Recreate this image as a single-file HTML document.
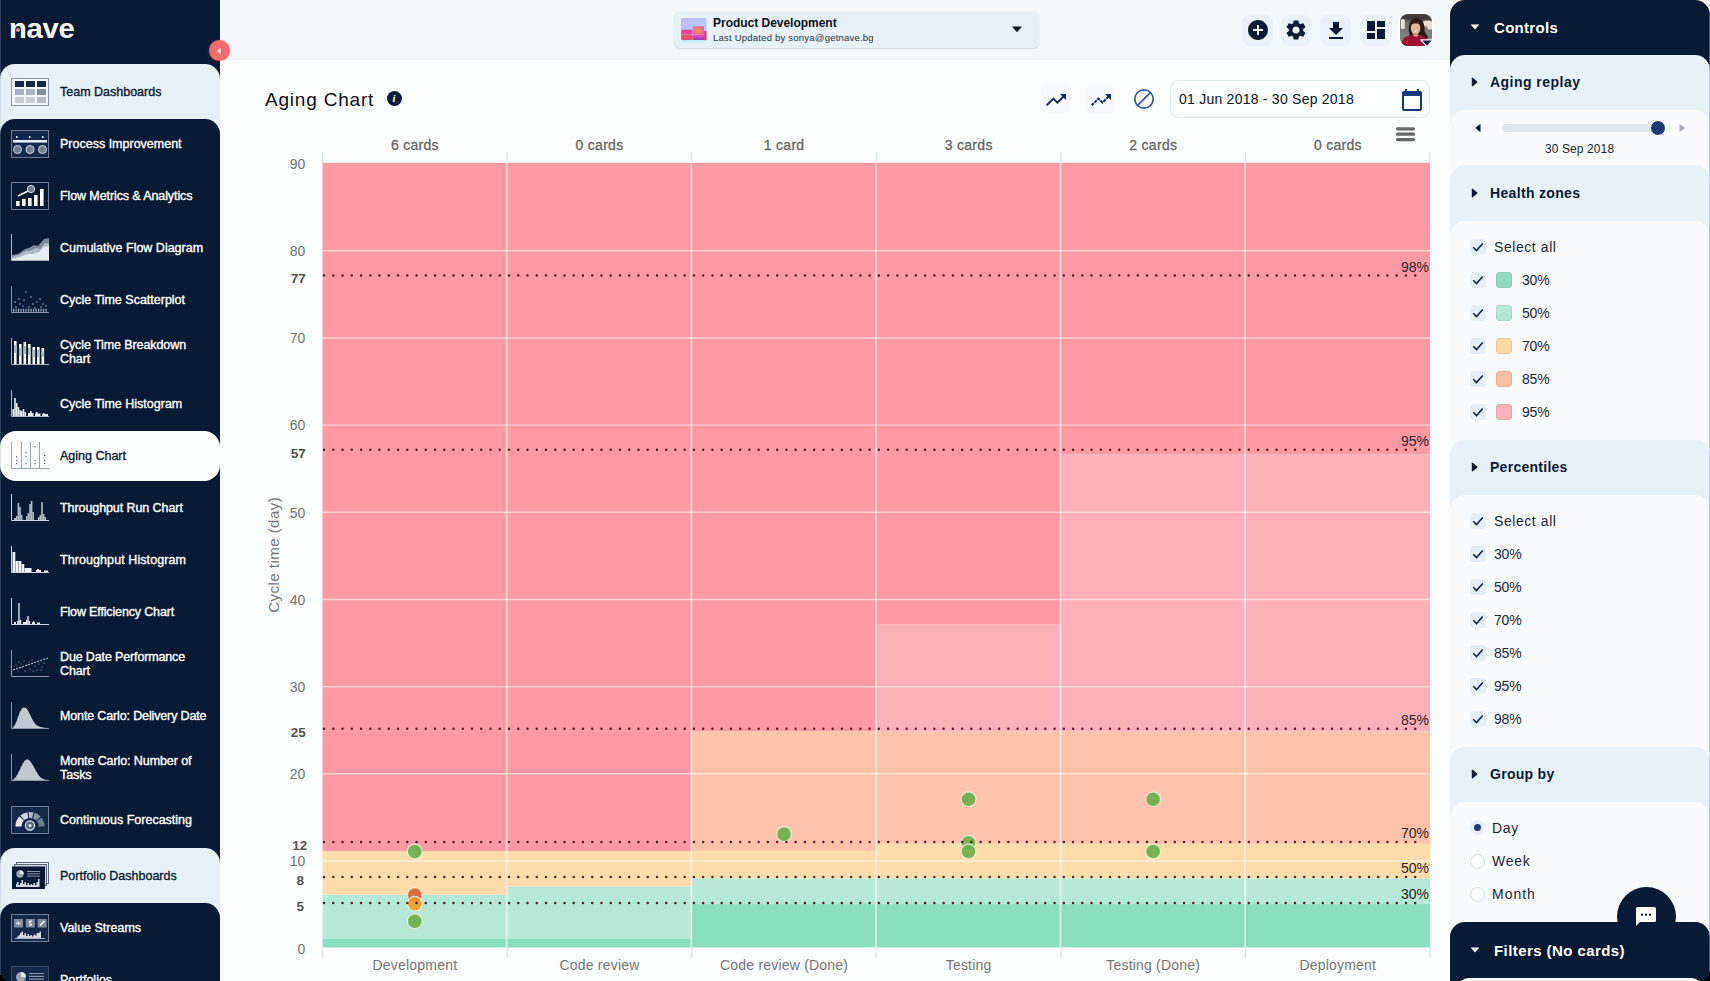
<!DOCTYPE html>
<html lang="en">
<head>
<meta charset="utf-8">
<title>Aging Chart - Nave</title>
<style>
*{box-sizing:border-box;margin:0;padding:0}
html,body{width:1710px;height:981px;overflow:hidden}
body{font-family:"Liberation Sans",sans-serif;background:#fcfdfe;color:#0a1b35;position:relative}
.abs{position:absolute}
/* ---------- left sidebar ---------- */
#side{position:absolute;left:0;top:0;width:220px;height:981px;background:#081a34;overflow:hidden}
#side .light{position:absolute;left:0;width:220px;background:#e9f1f8;border-radius:15px 15px 0 0}
#side .dark{position:absolute;left:0;width:220px;background:#081a34;border-radius:15px 15px 0 0}
#side .pill{position:absolute;left:0;top:430.500px;width:220px;height:50.500px;background:#fcfdfe;border-radius:16px}
.nav{position:absolute;left:60px;width:160px;color:#fff;font-size:12.500px;font-weight:normal;-webkit-text-stroke:.35px currentColor;line-height:14px;letter-spacing:0;white-space:nowrap}
.nav.dk{color:#081a34}
.ico{position:absolute;left:11px;width:38px;height:28px}
/* ---------- header ---------- */
#head{position:absolute;left:220px;top:0;width:1230px;height:60px;background:#f5f8fb}
#proj{position:absolute;left:674px;top:11px;width:365px;height:37px;background:#e8f0f8;border-radius:6px;box-shadow:0 1px 1.500px rgba(10,27,54,.14)}
.hbtn{position:absolute;top:14.500px;width:31px;height:31px;border-radius:8px;background:#eaf1f8}
/* ---------- right panel ---------- */
#right{position:absolute;left:1450px;top:0;width:260px;height:981px;background:#f9fbfd;overflow:hidden}
#right .blk{position:absolute;left:0;width:260px;border-radius:15px 15px 0 0}
.rh{position:absolute;left:40px;font-size:14px;font-weight:bold;color:#081a34;white-space:nowrap;letter-spacing:.15px}
.rl{position:absolute;font-size:14px;color:#1c2433;white-space:nowrap;letter-spacing:.3px}
.cb{position:absolute;left:20px;width:16px;height:16px;border-radius:4px;background:#e6eef7}
.sw{position:absolute;left:46px;width:16px;height:16px;border-radius:4px}
</style>
</head>
<body>

<!-- HEADER -->
<div id="head"></div>
<div id="proj"></div>
<svg class="abs" style="left:681px;top:17.500px" width="26" height="26" viewBox="0 0 26 26">
  <defs><linearGradient id="tg" x1="0" y1="0" x2="1" y2="1"><stop offset="0" stop-color="#c4b6f6"/><stop offset=".5" stop-color="#b9c6fa"/><stop offset="1" stop-color="#d6c4f6"/></linearGradient>
  <radialGradient id="to" cx=".45" cy=".5" r=".7"><stop offset="0" stop-color="#fb9a5e"/><stop offset="1" stop-color="#f0509a"/></radialGradient>
  <linearGradient id="tm" x1="0" y1="0" x2="0" y2="1"><stop offset="0" stop-color="#f255b8"/><stop offset="1" stop-color="#9a30c4"/></linearGradient></defs>
  <rect x="2" y="21" width="21" height="4" rx="2" fill="#b4f1f4" opacity=".7"/>
  <rect width="25.500" height="22.200" rx="1" fill="url(#tg)"/>
  <rect x=".2" y="11.700" width="11.500" height="4.700" rx="1" fill="#f040a2"/>
  <rect x=".2" y="16.800" width="11.500" height="5.300" rx="1" fill="#ee4e6e"/>
  <rect x="11.900" y="8.600" width="11.200" height="7.800" rx="1" fill="url(#to)"/>
  <rect x="11.900" y="16.600" width="11.500" height="5.500" rx="1" fill="url(#tm)"/>
  <rect x="23.300" y="13" width="2.200" height="9.100" fill="#d2366f"/>
</svg>
<div class="abs" id="pj1" style="left:713px;top:16px;font-size:12px;line-height:14px;font-weight:bold;color:#0a1220;white-space:nowrap;letter-spacing:-.02px">Product Development</div>
<div class="abs" id="pj2" style="left:713px;top:32px;font-size:9.500px;line-height:12px;color:#2a3140;white-space:nowrap;letter-spacing:.22px">Last Updated by sonya@getnave.bg</div>
<svg class="abs" style="left:1011px;top:26px" width="12" height="7" viewBox="0 0 12 7"><path d="M1 .5h10L6 6.200z" fill="#0a1220"/></svg>

<div class="hbtn" style="left:1242px"></div><div class="hbtn" style="left:1281px"></div><div class="hbtn" style="left:1320px"></div><div class="hbtn" style="left:1360px"></div>
<svg class="abs" style="left:1245.800px;top:18.300px" width="24" height="24" viewBox="0 0 24 24"><path fill="#081a34" d="M12 2C6.480 2 2 6.480 2 12s4.480 10 10 10 10-4.480 10-10S17.520 2 12 2zm5 11h-4v4h-2v-4H7v-2h4V7h2v4h4v2z"/></svg>
<svg class="abs" style="left:1284.400px;top:18.200px" width="24" height="24" viewBox="0 0 24 24"><path fill="#081a34" d="M19.140 12.940c.04-.3.06-.61.06-.94 0-.32-.02-.64-.07-.94l2.030-1.580c.18-.14.23-.41.12-.61l-1.920-3.320c-.12-.22-.37-.29-.59-.22l-2.390.96c-.5-.38-1.030-.7-1.620-.94l-.36-2.540c-.04-.24-.24-.41-.48-.41h-3.840c-.24 0-.43.17-.47.41l-.36 2.540c-.59.24-1.130.57-1.620.94l-2.390-.96c-.22-.08-.47 0-.59.22L2.740 8.870c-.12.21-.08.47.12.61l2.030 1.580c-.05.3-.09.63-.09.940s.02.640.07.940l-2.030 1.580c-.18.14-.23.41-.12.61l1.920 3.320c.12.22.37.29.59.22l2.390-.96c.5.38 1.030.7 1.620.94l.36 2.540c.05.24.24.41.48.41h3.840c.24 0 .44-.17.47-.41l.36-2.540c.59-.24 1.130-.56 1.620-.94l2.390.96c.22.08.47 0 .59-.22l1.920-3.320c.12-.22.07-.47-.12-.61l-2.010-1.580zM12 15.600c-1.980 0-3.600-1.620-3.600-3.600s1.620-3.600 3.600-3.600 3.600 1.620 3.600 3.600-1.620 3.600-3.600 3.600z"/></svg>
<svg class="abs" style="left:1324px;top:18.500px" width="24" height="24" viewBox="0 0 24 24"><path fill="#081a34" d="M19 9h-4V3H9v6H5l7 7 7-7zM5 18v2h14v-2H5z"/></svg>
<svg class="abs" style="left:1364px;top:18px" width="24" height="24" viewBox="0 0 24 24"><path fill="#081a34" d="M3 13h8V3H3v10zm0 8h8v-6H3v6zm10 0h8V11h-8v10zm0-18v6h8V3h-8z"/></svg>
<!-- avatar -->
<svg class="abs" style="left:1398px;top:12px" width="36" height="36" viewBox="-2 -2 36 36">
  <defs><clipPath id="avc"><rect width="32" height="32" rx="8"/></clipPath>
  <linearGradient id="avb" x1="0" y1="0" x2="0" y2="1"><stop offset="0" stop-color="#4a4644"/><stop offset=".12" stop-color="#3c3836"/><stop offset=".3" stop-color="#77736f"/><stop offset="1" stop-color="#8c8c8e"/></linearGradient></defs>
  <rect x="-1.200" y="-1.200" width="34.400" height="34.400" rx="9" fill="#fcfdfe"/>
  <g clip-path="url(#avc)"><rect width="32" height="32" fill="url(#avb)"/>
  <rect x=".8" y="5" width="4" height="10" rx="1.500" fill="#e6e2d4"/><path d="M23 7.500q4-2 9 0v8h-4l-1-3h-4z" fill="#e9dcd0"/>
  <path d="M9.500 21c-2-8 0-17 6.500-17s9 6 8.500 12c0 3 3 5 4 8l-6 2H11z" fill="#2b1b18"/>
  <ellipse cx="15.600" cy="14.300" rx="4.700" ry="6.300" fill="#e3b59c"/>
  <path d="M11 10.500c1-3.500 8-3.500 9.500 0-3-1.500-6.500-1.500-9.500 0z" fill="#3a2420"/>
  <path d="M13.300 16.300q2.300 1 4.800 0q-2.400 2.800-4.800 0z" fill="#fff"/>
  <path d="M12.600 20.500h6v4h-6z" fill="#e0a890"/>
  <path d="M1 32c0-7 5-10.500 11.500-11 2 2 5 2 7 0 5 .5 8 4 8.500 11z" fill="#9c1030"/></g>
  <path d="M20.800 25.900h12.400l-6.200 6.500z" fill="#081a34" stroke="#fcfdfe" stroke-width="1.300" stroke-linejoin="round"/>
</svg>

<!-- title -->
<div class="abs" id="title" style="left:265px;top:87.500px;font-size:19px;line-height:24px;color:#0b0e16;white-space:nowrap;letter-spacing:.8px">Aging Chart</div>
<div class="abs" style="left:386.500px;top:91px;width:15px;height:15px;border-radius:50%;background:#081a34;color:#fff;font-family:'Liberation Serif',serif;font-weight:bold;font-style:italic;font-size:11px;line-height:15px;text-align:center">i</div>

<!-- toolbar -->
<div class="abs" style="left:1041px;top:84px;width:30px;height:30px;border-radius:8px;background:#f8fafd"></div>
<div class="abs" style="left:1085px;top:84px;width:30px;height:30px;border-radius:8px;background:#f8fafd"></div>
<svg class="abs" style="left:1044px;top:87.500px" width="24" height="24" viewBox="0 0 24 24"><path fill="#14295e" d="M16 6l2.290 2.290-4.880 4.880-4-4L2 16.590 3.410 18l6-6 4 4 6.300-6.290L22 12V6z"/></svg>
<svg class="abs" style="left:1088.500px;top:87.500px" width="24" height="24" viewBox="0 0 24 24"><path fill="none" stroke="#7d8fb8" stroke-width="1.600" d="M2.700 17.300l6.700-6.700 4 4 6.500-6.500"/><path fill="none" stroke="#14295e" stroke-width="2" stroke-dasharray="2.600 1.600" d="M2.700 17.300l6.700-6.700 4 4 6.500-6.500"/><path fill="#14295e" d="M16 6l2.290 2.290L20.500 10.500 22 12V6z"/></svg>
<svg class="abs" style="left:1132px;top:87px" width="24" height="24" viewBox="0 0 24 24"><circle cx="12" cy="12" r="9.200" fill="none" stroke="#3a5593" stroke-width="1.700"/><path d="M5.600 18.400L18.400 5.600" stroke="#3a5593" stroke-width="1.700"/></svg>
<div class="abs" style="left:1170px;top:80px;width:260px;height:38px;border:1px solid #dfe7f0;border-radius:9px;background:#fdfeff"></div>
<div class="abs" id="dater" style="left:1179px;top:90px;font-size:14px;line-height:18px;color:#0a1220;white-space:nowrap;letter-spacing:.24px">01 Jun 2018 - 30 Sep 2018</div>
<svg class="abs" style="left:1400px;top:87.500px" width="24" height="24" viewBox="0 0 24 24"><path fill="#17377a" d="M20 3h-1V1h-2v2H7V1H5v2H4c-1.100 0-2 .9-2 2v16c0 1.100.9 2 2 2h16c1.100 0 2-.9 2-2V5c0-1.100-.9-2-2-2zm0 18H4V8h16v13z"/></svg>
<svg class="abs" style="left:1394px;top:124px" width="24" height="20" viewBox="0 0 24 20"><path d="M3.500 4.800h16M3.500 10.200h16M3.500 15.600h16" stroke="#666" stroke-width="3.200" stroke-linecap="round"/></svg>

<!-- CHART -->
<svg class="abs" style="left:220px;top:120px" width="1230" height="861" viewBox="220 120 1230 861" font-family="'Liberation Sans',sans-serif">
<rect x="322.50" y="938.33" width="184.58" height="9.07" fill="#8bdfc1"/>
<rect x="322.50" y="894.66" width="184.58" height="43.68" fill="#b4ead7"/>
<rect x="322.50" y="851.07" width="184.58" height="43.59" fill="#ffdca9"/>
<rect x="322.50" y="162.80" width="184.58" height="688.27" fill="#ff99a3"/>
<rect x="507.08" y="938.33" width="184.58" height="9.07" fill="#8bdfc1"/>
<rect x="507.08" y="886.38" width="184.58" height="51.96" fill="#b4ead7"/>
<rect x="507.08" y="851.07" width="184.58" height="35.31" fill="#ffdca9"/>
<rect x="507.08" y="162.80" width="184.58" height="688.27" fill="#ff99a3"/>
<rect x="691.67" y="904.07" width="184.58" height="43.33" fill="#8bdfc1"/>
<rect x="691.67" y="878.27" width="184.58" height="25.80" fill="#b4ead7"/>
<rect x="691.67" y="851.07" width="184.58" height="27.20" fill="#ffdca9"/>
<rect x="691.67" y="731.20" width="184.58" height="119.87" fill="#ffc3a9"/>
<rect x="691.67" y="162.80" width="184.58" height="568.40" fill="#ff99a3"/>
<rect x="876.25" y="904.07" width="184.58" height="43.33" fill="#8bdfc1"/>
<rect x="876.25" y="878.27" width="184.58" height="25.80" fill="#b4ead7"/>
<rect x="876.25" y="843.83" width="184.58" height="34.44" fill="#ffdca9"/>
<rect x="876.25" y="731.20" width="184.58" height="112.63" fill="#ffc3a9"/>
<rect x="876.25" y="624.41" width="184.58" height="106.79" fill="#ffb1b9"/>
<rect x="876.25" y="162.80" width="184.58" height="461.61" fill="#ff99a3"/>
<rect x="1060.83" y="904.07" width="184.58" height="43.33" fill="#8bdfc1"/>
<rect x="1060.83" y="878.27" width="184.58" height="25.80" fill="#b4ead7"/>
<rect x="1060.83" y="843.83" width="184.58" height="34.44" fill="#ffdca9"/>
<rect x="1060.83" y="731.20" width="184.58" height="112.63" fill="#ffc3a9"/>
<rect x="1060.83" y="454.24" width="184.58" height="276.96" fill="#ffb1b9"/>
<rect x="1060.83" y="162.80" width="184.58" height="291.44" fill="#ff99a3"/>
<rect x="1245.42" y="904.07" width="184.58" height="43.33" fill="#8bdfc1"/>
<rect x="1245.42" y="878.27" width="184.58" height="25.80" fill="#b4ead7"/>
<rect x="1245.42" y="843.83" width="184.58" height="34.44" fill="#ffdca9"/>
<rect x="1245.42" y="731.20" width="184.58" height="112.63" fill="#ffc3a9"/>
<rect x="1245.42" y="454.24" width="184.58" height="276.96" fill="#ffb1b9"/>
<rect x="1245.42" y="162.80" width="184.58" height="291.44" fill="#ff99a3"/>
<path d="M322.5 861.0H1430.0M322.5 773.8H1430.0M322.5 686.7H1430.0M322.5 599.5H1430.0M322.5 512.3H1430.0M322.5 425.1H1430.0M322.5 338.0H1430.0M322.5 250.8H1430.0" stroke="#fff" stroke-opacity=".52" stroke-width="1.4" fill="none"/>
<path d="M322.5 152V162.8M322.5 947.4V958M507.1 152V162.8M507.1 947.4V958M691.7 152V162.8M691.7 947.4V958M876.2 152V162.8M876.2 947.4V958M1060.8 152V162.8M1060.8 947.4V958M1245.4 152V162.8M1245.4 947.4V958M1430.0 152V162.8M1430.0 947.4V958" stroke="#d9e0ec" stroke-width="1.2" fill="none"/>
<path d="M506.7 162.8V947.4M691.3 162.8V947.4M875.9 162.8V947.4M1060.4 162.8V947.4M1245.0 162.8V947.4" stroke="#fff" stroke-opacity=".5" stroke-width="2" fill="none"/>
<circle cx="414.8" cy="851.5" r="7.4" fill="#6cb04e" fill-opacity=".92" stroke="#f1f4de" stroke-opacity=".85" stroke-width="1.2"/>
<circle cx="414.8" cy="895.1" r="7.4" fill="#d9603b" fill-opacity=".92" stroke="#f1f4de" stroke-opacity=".85" stroke-width="1.2"/>
<circle cx="414.8" cy="903.8" r="7.4" fill="#f39a2d" fill-opacity=".92" stroke="#f1f4de" stroke-opacity=".85" stroke-width="1.2"/>
<circle cx="414.8" cy="921.2" r="7.4" fill="#6cb04e" fill-opacity=".92" stroke="#f1f4de" stroke-opacity=".85" stroke-width="1.2"/>
<circle cx="784.0" cy="834.1" r="7.4" fill="#6cb04e" fill-opacity=".92" stroke="#f1f4de" stroke-opacity=".85" stroke-width="1.2"/>
<circle cx="968.5" cy="799.2" r="7.4" fill="#6cb04e" fill-opacity=".92" stroke="#f1f4de" stroke-opacity=".85" stroke-width="1.2"/>
<circle cx="968.5" cy="842.8" r="7.4" fill="#6cb04e" fill-opacity=".92" stroke="#f1f4de" stroke-opacity=".85" stroke-width="1.2"/>
<circle cx="968.5" cy="851.5" r="7.4" fill="#6cb04e" fill-opacity=".92" stroke="#f1f4de" stroke-opacity=".85" stroke-width="1.2"/>
<circle cx="1153.1" cy="799.2" r="7.4" fill="#6cb04e" fill-opacity=".92" stroke="#f1f4de" stroke-opacity=".85" stroke-width="1.2"/>
<circle cx="1153.1" cy="851.5" r="7.4" fill="#6cb04e" fill-opacity=".92" stroke="#f1f4de" stroke-opacity=".85" stroke-width="1.2"/>
<path d="M324.05 275.4H1424" stroke="#43121a" stroke-opacity=".92" stroke-width="2.5" stroke-linecap="round" stroke-dasharray="0.01 9.237" fill="none"/>
<text x="1429" y="271.7" text-anchor="end" font-size="14" fill="#2e2224">98%</text>
<text x="305.7" y="283.4" text-anchor="end" font-size="13.500" font-weight="bold" fill="#525252">77</text>
<path d="M324.05 449.8H1424" stroke="#43121a" stroke-opacity=".92" stroke-width="2.5" stroke-linecap="round" stroke-dasharray="0.01 9.237" fill="none"/>
<text x="1429" y="446.1" text-anchor="end" font-size="14" fill="#2e2224">95%</text>
<text x="305.7" y="457.8" text-anchor="end" font-size="13.500" font-weight="bold" fill="#525252">57</text>
<path d="M324.05 728.8H1424" stroke="#43121a" stroke-opacity=".92" stroke-width="2.5" stroke-linecap="round" stroke-dasharray="0.01 9.237" fill="none"/>
<text x="1429" y="725.1" text-anchor="end" font-size="14" fill="#2e2224">85%</text>
<text x="305.7" y="736.8" text-anchor="end" font-size="13.500" font-weight="bold" fill="#525252">25</text>
<path d="M324.05 842.1H1424" stroke="#43121a" stroke-opacity=".92" stroke-width="2.5" stroke-linecap="round" stroke-dasharray="0.01 9.237" fill="none"/>
<text x="1429" y="838.4" text-anchor="end" font-size="14" fill="#2e2224">70%</text>
<text x="307.4" y="850.1" text-anchor="end" font-size="13.500" font-weight="bold" fill="#525252">12</text>
<path d="M324.05 877.0H1424" stroke="#43121a" stroke-opacity=".92" stroke-width="2.5" stroke-linecap="round" stroke-dasharray="0.01 9.237" fill="none"/>
<text x="1429" y="873.3" text-anchor="end" font-size="14" fill="#2e2224">50%</text>
<text x="303.9" y="885.0" text-anchor="end" font-size="13.500" font-weight="bold" fill="#525252">8</text>
<path d="M324.05 903.1H1424" stroke="#43121a" stroke-opacity=".92" stroke-width="2.5" stroke-linecap="round" stroke-dasharray="0.01 9.237" fill="none"/>
<text x="1429" y="899.4" text-anchor="end" font-size="14" fill="#2e2224">30%</text>
<text x="303.9" y="911.1" text-anchor="end" font-size="13.500" font-weight="bold" fill="#525252">5</text>
<text x="305.4" y="953.5" text-anchor="end" font-size="14" fill="#707070">0</text>
<text x="305.4" y="866.3" text-anchor="end" font-size="14" fill="#707070">10</text>
<text x="305.4" y="779.1" text-anchor="end" font-size="14" fill="#707070">20</text>
<text x="305.4" y="692.0" text-anchor="end" font-size="14" fill="#707070">30</text>
<text x="305.4" y="604.8" text-anchor="end" font-size="14" fill="#707070">40</text>
<text x="305.4" y="517.6" text-anchor="end" font-size="14" fill="#707070">50</text>
<text x="305.4" y="430.4" text-anchor="end" font-size="14" fill="#707070">60</text>
<text x="305.4" y="343.3" text-anchor="end" font-size="14" fill="#707070">70</text>
<text x="305.4" y="256.1" text-anchor="end" font-size="14" fill="#707070">80</text>
<text x="305.4" y="168.9" text-anchor="end" font-size="14" fill="#707070">90</text>
<text x="414.9" y="149.6" text-anchor="middle" font-size="14" fill="#666" stroke="#666" stroke-width=".3" letter-spacing=".3">6 cards</text>
<text x="414.9" y="970" text-anchor="middle" font-size="14" fill="#747474" letter-spacing=".2">Development</text>
<text x="599.5" y="149.6" text-anchor="middle" font-size="14" fill="#666" stroke="#666" stroke-width=".3" letter-spacing=".3">0 cards</text>
<text x="599.5" y="970" text-anchor="middle" font-size="14" fill="#747474" letter-spacing=".2">Code review</text>
<text x="784.1" y="149.6" text-anchor="middle" font-size="14" fill="#666" stroke="#666" stroke-width=".3" letter-spacing=".3">1 card</text>
<text x="784.1" y="970" text-anchor="middle" font-size="14" fill="#747474" letter-spacing=".2">Code review (Done)</text>
<text x="968.7" y="149.6" text-anchor="middle" font-size="14" fill="#666" stroke="#666" stroke-width=".3" letter-spacing=".3">3 cards</text>
<text x="968.6" y="970" text-anchor="middle" font-size="14" fill="#747474" letter-spacing=".2">Testing</text>
<text x="1153.3" y="149.6" text-anchor="middle" font-size="14" fill="#666" stroke="#666" stroke-width=".3" letter-spacing=".3">2 cards</text>
<text x="1153.2" y="970" text-anchor="middle" font-size="14" fill="#747474" letter-spacing=".2">Testing (Done)</text>
<text x="1337.9" y="149.6" text-anchor="middle" font-size="14" fill="#666" stroke="#666" stroke-width=".3" letter-spacing=".3">0 cards</text>
<text x="1337.8" y="970" text-anchor="middle" font-size="14" fill="#747474" letter-spacing=".2">Deployment</text>
<text transform="translate(278.5 554.8) rotate(-90)" text-anchor="middle" font-size="15" fill="#777" letter-spacing=".48">Cycle time (day)</text>
</svg>

<!-- SIDEBAR -->
<div id="side">
  <div class="light" style="top:64px;height:80px"></div>
  <div class="dark" style="top:119px;height:760px"></div>
  <div class="pill"></div>
  <div class="light" style="top:848px;height:80px"></div>
  <div class="dark" style="top:903px;height:90px"></div>
  <!-- logo -->
  <div class="abs" style="left:9.300px;top:13px;font-size:27px;line-height:32px;font-weight:bold;color:#fff;letter-spacing:-.2px;transform:scaleX(1.08);transform-origin:0 0">nave</div>
  <div class="abs" style="left:15.600px;top:28.300px;width:4px;height:4px;border-radius:50%;background:#f58a8a"></div>

  <!-- Team Dashboards -->
  <svg class="ico" style="top:78px" viewBox="0 0 38 28"><rect x=".5" y=".5" width="37" height="27" fill="#f3f6fa" stroke="#8a95a5"/>
    <g fill="#14294a"><rect x="4" y="3" width="9" height="6"/><rect x="15" y="3" width="9" height="6"/><rect x="26" y="3" width="9" height="6"/></g>
    <g fill="#aab3c0"><rect x="4" y="11" width="9" height="6"/><rect x="15" y="11" width="9" height="6"/></g><rect x="26" y="11" width="9" height="6" fill="#7f8a9c"/>
    <g fill="#c8cfd8"><rect x="4" y="19" width="9" height="6"/><rect x="15" y="19" width="9" height="6"/><rect x="26" y="19" width="9" height="6" fill="#b4bcc8"/></g></svg>
  <div class="nav dk" style="top:84.5px">Team Dashboards</div>

  <!-- Process Improvement -->
  <svg class="ico" style="top:130px" viewBox="0 0 38 28"><rect x=".5" y=".5" width="37" height="27" fill="#14294a" stroke="#6f7c92"/>
    <rect x="2" y="10" width="34" height="2.600" fill="#e8edf3"/><g fill="#e8edf3"><rect x="5" y="6" width="1.500" height="2"/><rect x="18" y="6" width="1.500" height="2"/><rect x="31" y="6" width="1.500" height="2"/></g>
    <g fill="#6f7c92" stroke="#cfd6df" stroke-width="1"><circle cx="6.500" cy="19.500" r="4"/><circle cx="19" cy="19.500" r="4"/><circle cx="31.500" cy="19.500" r="4"/></g></svg>
  <div class="nav" style="top:136.5px">Process Improvement</div>

  <!-- Flow Metrics -->
  <svg class="ico" style="top:182px" viewBox="0 0 38 28"><rect x=".5" y=".5" width="37" height="27" fill="#081a34" stroke="#6f7c92"/>
    <g fill="#fff"><rect x="5" y="19" width="3.600" height="5"/><rect x="11" y="17" width="3.600" height="7"/><rect x="17" y="16" width="3.600" height="8"/><rect x="23" y="13" width="3.600" height="11"/><rect x="29" y="7" width="3.600" height="17"/></g>
    <path d="M7 14l10-5" stroke="#fff" stroke-width="1.800"/><circle cx="20" cy="7" r="3.600" fill="#6f7c92" stroke="#dfe5ec" stroke-width="1"/></svg>
  <div class="nav" style="top:188.5px;letter-spacing:-0.1px">Flow Metrics &amp; Analytics</div>

  <!-- CFD -->
  <svg class="ico" style="top:234px" viewBox="0 0 38 28"><path d="M.5 0v26.500H38" fill="none" stroke="#aab3c0"/>
    <path d="M1 26V21l6-1 7-5 4-1 5-3 4 1 6-7 5-1V26z" fill="#7f8a9c"/><path d="M1 26V23l7-2 7-4 4 0 6-3 4 1 5-6 4 0V26z" fill="#b4bcc8"/><path d="M1 26V25l8-2 8-3 5 0 6-2 5-5 5-1V26z" fill="#e8edf3"/></svg>
  <div class="nav" style="top:240.5px">Cumulative Flow Diagram</div>

  <!-- Scatterplot -->
  <svg class="ico" style="top:286px" viewBox="0 0 38 28"><path d="M.5 0v26.500H38" fill="none" stroke="#8a95a5"/>
    <g fill="#cfd6df"><circle cx="4" cy="16" r=".7"/><circle cx="8" cy="13" r=".7"/><circle cx="9" cy="18" r=".7"/><circle cx="13" cy="14" r=".7"/><circle cx="15" cy="6" r=".7"/><circle cx="20" cy="11" r=".7"/><circle cx="22" cy="18" r=".7"/><circle cx="26" cy="16" r=".7"/><circle cx="29" cy="13" r=".7"/><circle cx="32" cy="18" r=".7"/><circle cx="35" cy="20" r=".7"/><circle cx="12" cy="20" r=".7"/><circle cx="18" cy="21" r=".7"/><circle cx="5" cy="21" r=".7"/><circle cx="30" cy="21" r=".7"/><circle cx="24" cy="22" r=".7"/></g>
    <path d="M2 23.500h35M2 25h35" stroke="#aab3c0" stroke-width="1.400" stroke-dasharray="1.200 1.300"/></svg>
  <div class="nav" style="top:292.5px">Cycle Time Scatterplot</div>

  <!-- Breakdown -->
  <svg class="ico" style="top:338px" viewBox="0 0 38 28"><path d="M.5 0v26.500H38" fill="none" stroke="#aab3c0"/>
    <g fill="#fff"><rect x="3" y="3" width="2.600" height="23"/><rect x="8" y="6" width="2.600" height="20"/><rect x="12.500" y="4" width="2.600" height="22"/><rect x="17" y="6" width="2.600" height="20"/><rect x="21.500" y="9" width="2.600" height="17"/><rect x="26" y="9" width="2.600" height="17"/><rect x="30.500" y="10" width="2.600" height="16"/></g>
    <g fill="#b4bcc8"><rect x="3" y="7" width="2.600" height="8"/><rect x="8" y="10" width="2.600" height="8"/><rect x="12.500" y="8" width="2.600" height="8"/><rect x="17" y="10" width="2.600" height="7"/><rect x="21.500" y="12" width="2.600" height="7"/><rect x="26" y="12" width="2.600" height="7"/><rect x="30.500" y="13" width="2.600" height="6"/></g></svg>
  <div class="nav" style="top:337.5px;letter-spacing:-0.09px">Cycle Time Breakdown<br>Chart</div>

  <!-- Histogram -->
  <svg class="ico" style="top:390px" viewBox="0 0 38 28"><path d="M.5 0v26.500H38" fill="none" stroke="#aab3c0"/>
    <g fill="#e8edf3"><rect x="1.500" y="19" width="1.600" height="7"/><rect x="3.200" y="8" width="1.600" height="18"/><rect x="4.900" y="13" width="1.600" height="13"/><rect x="6.600" y="17" width="1.600" height="9"/><rect x="8.300" y="20" width="1.600" height="6"/><rect x="10" y="21" width="1.600" height="5"/><rect x="11.700" y="19" width="1.600" height="7"/><rect x="13.400" y="22" width="1.600" height="4"/><rect x="17" y="23" width="5.500" height="3"/><rect x="19" y="21" width="1.600" height="2"/><rect x="24" y="23.500" width="5.500" height="2.500"/><rect x="25" y="22" width="1.600" height="2"/><rect x="31" y="24" width="6" height="2"/><rect x="32" y="23" width="1.600" height="1"/></g></svg>
  <div class="nav" style="top:396.5px">Cycle Time Histogram</div>

  <!-- Aging -->
  <svg class="ico" style="top:442px" viewBox="0 0 38 28"><path d="M.5 0v26.500H38M10.500 0v26M19.500 0v26M28.500 0v26" fill="none" stroke="#9aa4b3"/>
    <g fill="#5c6a80"><rect x="5" y="14" width="1.200" height="1.200"/><rect x="5" y="18" width="1.200" height="1.200"/><rect x="5" y="21" width="1.200" height="1.200"/><rect x="14.500" y="10" width="1.200" height="1.200"/><rect x="14.500" y="14" width="1.200" height="1.200"/><rect x="14.500" y="21" width="1.200" height="1.200"/><rect x="23.500" y="4" width="1.200" height="1.200"/><rect x="23.500" y="18" width="1.200" height="1.200"/><rect x="23.500" y="21" width="1.200" height="1.200"/><rect x="33" y="13" width="1.200" height="1.200"/><rect x="33" y="18" width="1.200" height="1.200"/><rect x="33" y="21" width="1.200" height="1.200"/></g></svg>
  <div class="nav dk" style="top:448.5px">Aging Chart</div>

  <!-- Throughput Run -->
  <svg class="ico" style="top:494px" viewBox="0 0 38 28"><path d="M.5 0v26.500H38" fill="none" stroke="#cfd6df"/>
    <g fill="#b4bcc8"><rect x="3" y="24" width="2" height="2"/><rect x="5" y="22" width="1.600" height="4"/><rect x="6.600" y="9" width="1.600" height="17"/><rect x="8.200" y="13" width="1.600" height="13"/><rect x="9.800" y="21" width="1.600" height="5"/><rect x="15" y="22" width="1.600" height="4"/><rect x="16.600" y="19" width="1.600" height="7"/><rect x="18.200" y="10" width="1.600" height="16"/><rect x="19.800" y="7" width="1.600" height="19"/><rect x="21.400" y="18" width="1.600" height="8"/><rect x="27" y="23" width="1.600" height="3"/><rect x="28.600" y="21" width="1.600" height="5"/><rect x="30.200" y="8" width="1.600" height="18"/><rect x="31.800" y="20" width="1.600" height="6"/><rect x="33.400" y="23" width="1.600" height="3"/></g></svg>
  <div class="nav" style="top:500.5px;letter-spacing:-0.08px">Throughput Run Chart</div>

  <!-- Throughput Histogram -->
  <svg class="ico" style="top:546px" viewBox="0 0 38 28"><path d="M.5 0v26.500H38" fill="none" stroke="#cfd6df"/>
    <g fill="#f3f6fa"><rect x="1.500" y="6" width="2.800" height="20"/><rect x="4.500" y="15" width="2.800" height="11"/><rect x="7.500" y="15" width="2.800" height="11"/><rect x="10.500" y="18" width="2.800" height="8"/><rect x="13.500" y="22" width="7" height="4"/><rect x="25" y="24" width="5" height="2"/><rect x="26" y="23" width="2" height="1"/><rect x="33" y="24.500" width="4" height="1.500"/></g></svg>
  <div class="nav" style="top:552.5px;letter-spacing:0.08px">Throughput Histogram</div>

  <!-- Flow Efficiency -->
  <svg class="ico" style="top:598px" viewBox="0 0 38 28"><path d="M.5 0v26.500H38" fill="none" stroke="#cfd6df"/>
    <g fill="#f3f6fa"><rect x="3" y="24" width="2" height="2"/><rect x="6" y="23" width="1.300" height="3"/><rect x="7.300" y="5" width="1.300" height="21"/><rect x="8.600" y="22" width="1.600" height="4"/><rect x="12" y="24" width="3" height="2"/><rect x="15" y="22" width="1.400" height="4"/><rect x="16.400" y="18" width="1.300" height="8"/><rect x="17.700" y="23" width="1.400" height="3"/><rect x="21" y="24" width="3" height="2"/><rect x="22" y="23" width="1.200" height="1"/><rect x="26" y="24.500" width="3" height="1.500"/></g></svg>
  <div class="nav" style="top:604.5px;letter-spacing:-0.15px">Flow Efficiency Chart</div>

  <!-- Due date -->
  <svg class="ico" style="top:650px" viewBox="0 0 38 28"><path d="M.5 0v26.500H38" fill="none" stroke="#8a95a5"/>
    <path d="M2 20L37 8" stroke="#cfd6df" stroke-width="1" stroke-dasharray="2 1.200"/>
    <g fill="#aab3c0"><circle cx="5" cy="15" r=".6"/><circle cx="8" cy="12" r=".6"/><circle cx="11" cy="17" r=".6"/><circle cx="13" cy="11" r=".6"/><circle cx="16" cy="15" r=".6"/><circle cx="19" cy="19" r=".6"/><circle cx="21" cy="10" r=".6"/><circle cx="24" cy="16" r=".6"/><circle cx="26" cy="20" r=".6"/><circle cx="28" cy="14" r=".6"/><circle cx="31" cy="17" r=".6"/><circle cx="33" cy="13" r=".6"/><circle cx="7" cy="21" r=".6"/><circle cx="14" cy="21" r=".6"/><circle cx="22" cy="21" r=".6"/><circle cx="30" cy="20" r=".6"/><circle cx="10" cy="14" r=".6"/><circle cx="18" cy="12" r=".6"/></g></svg>
  <div class="nav" style="top:649.5px;letter-spacing:-0.14px">Due Date Performance<br>Chart</div>

  <!-- MC delivery -->
  <svg class="ico" style="top:702px" viewBox="0 0 38 28"><path d="M.5 0v26.500H38" fill="none" stroke="#8a95a5"/>
    <path d="M1.500 26C6 24 8 6 13 5.500 18 5 20 20 27 24 30 25.500 34 26 37 26z" fill="#cfd6df"/><path d="M3 26V23M5 26V20M7 26V14M9 26V9M11 26V6M13 26V5.500M15 26V7M17 26V10M19 26V14M21 26V18M23 26V21M25 26V23M27 26V24.500" stroke="#9aa4b3" stroke-width=".6"/></svg>
  <div class="nav" style="top:708.5px;letter-spacing:-0.14px">Monte Carlo: Delivery Date</div>

  <!-- MC tasks -->
  <svg class="ico" style="top:754px" viewBox="0 0 38 28"><path d="M.5 0v26.500H38" fill="none" stroke="#8a95a5"/>
    <path d="M1.500 26C7 25 11 6 16 5.500 21 5 25 21 31 24.500 33 25.500 35 26 37 26z" fill="#cfd6df"/><path d="M4 26V23.500M6 26V21M8 26V17M10 26V12M12 26V8.500M14 26V6.300M16 26V5.500M18 26V6.500M20 26V9.500M22 26V13M24 26V17M26 26V20.500M28 26V23M30 26V24.500" stroke="#9aa4b3" stroke-width=".6"/></svg>
  <div class="nav" style="top:753.5px;letter-spacing:-0.09px">Monte Carlo: Number of<br>Tasks</div>

  <!-- Continuous Forecasting -->
  <svg class="ico" style="top:806px" viewBox="0 0 38 28"><rect x=".5" y=".5" width="37" height="27" fill="#14294a" stroke="#6f7c92"/>
    <g fill="none" stroke-width="6"><path d="M7.500 20.500A11.500 11.500 0 0 1 10.500 12.500" stroke="#e8edf3" /><path d="M11.200 11.800A11.500 11.500 0 0 1 16.800 9.200" stroke="#cfd6df"/><path d="M17.800 9.050A11.500 11.500 0 0 1 21.800 9.350" stroke="#b4bcc8"/><path d="M22.800 9.650A11.500 11.500 0 0 1 27.500 12.500" stroke="#8a95a5"/><path d="M28.200 13.300A11.500 11.500 0 0 1 30.500 20.500" stroke="#6f7c92"/></g>
    <circle cx="19" cy="19.500" r="4.600" fill="#5c6a80" stroke="#e8edf3" stroke-width="1.100"/><circle cx="19" cy="19.500" r="1.600" fill="#e8edf3"/></svg>
  <div class="nav" style="top:812.5px">Continuous Forecasting</div>

  <!-- Portfolio Dashboards -->
  <svg class="ico" style="top:862px" viewBox="0 0 38 28"><rect x="5.500" y=".5" width="32" height="21" fill="#e9f1f8" stroke="#5c6a80"/><rect x="3.500" y="2.500" width="32" height="21" fill="#c8cfd8" stroke="#5c6a80"/><rect x="1" y="4.500" width="33" height="22.500" fill="#081a34"/>
    <circle cx="9" cy="12" r="3.700" fill="#9aa4b3"/><path d="M9 12V8.300A3.700 3.700 0 0 1 12.700 12z" fill="#e8edf3"/><path d="M16 9.500h13M16 11.800h13M16 14.100h13" stroke="#8a95a5" stroke-width="1"/>
    <path d="M5 25v-3h1v-2h1.500v3H9v-2h1.500v-3H12v4h1.500v-2H15v3h1.500v-2H18v2h1.500v-1H21v1h1.500v-2H24v2h1.500v-3H27v-3h1.500V25z" fill="#cfd6df"/></svg>
  <div class="nav dk" style="top:868.5px">Portfolio Dashboards</div>

  <!-- Value Streams -->
  <svg class="ico" style="top:914px" viewBox="0 0 38 28"><rect x=".5" y=".5" width="37" height="27" fill="#14294a" stroke="#6f7c92"/>
    <g fill="#7f8a9c"><rect x="3" y="5" width="9" height="8.500"/><rect x="14.800" y="5" width="9" height="8.500"/><rect x="26.600" y="5" width="9" height="8.500"/></g>
    <path d="M5 9.200h1.600M8.400 9.200H10M7 7.500l.8 3.500" stroke="#fff" stroke-width="1.100" fill="none"/><path d="M20.800 7.300c-2.600-.8-3 1.400-1.500 1.900 1.500.5 1.500 2.500-1.300 1.800" stroke="#fff" stroke-width="1.100" fill="none"/><path d="M29 11.500l4.500-4.500" stroke="#fff" stroke-width="1.300"/>
    <path d="M6 24v-1.500h1.500V21H9v-2h1.500v-1.500H12V21h1.500v-2H15v3h1.500v-2H18v2h1.500v-1H21v1.500h1.500v-2H24v1h1.500v-2.500H27V19h1.500v-1.500H30V24z" fill="#cfd6df"/><path d="M4 24.500h30" stroke="#cfd6df" stroke-width=".8"/></svg>
  <div class="nav" style="top:920.5px">Value Streams</div>

  <!-- Portfolios -->
  <svg class="ico" style="top:966px" viewBox="0 0 38 28"><rect x=".5" y=".5" width="37" height="27" fill="#14294a" stroke="#3c4a63"/>
    <circle cx="10" cy="11" r="5" fill="#9aa4b3"/><path d="M10 11V6A5 5 0 0 1 15 11z" fill="#e8edf3"/><path d="M18 7.500h15M18 10.300h15M18 13.100h15" stroke="#8a95a5" stroke-width="1.200"/></svg>
  <div class="nav" style="top:972.5px">Portfolios</div>
</div>

<div class="abs" style="left:209px;top:40px;width:21px;height:21px;border-radius:50%;background:#f56b6b;box-shadow:0 0 3px rgba(245,107,107,.35)"></div>
<svg class="abs" style="left:215.500px;top:46.500px" width="6" height="8" viewBox="0 0 6 8"><path d="M4.800 .8v6.400L.8 4z" fill="#fbe3e3"/></svg>

<!-- RIGHT PANEL -->
<div id="right">
<div class="blk" style="top:0px;height:80px;background:#081a34"></div>
<svg class="abs" style="left:19.5px;top:24px" width="10" height="6" viewBox="0 0 10 6"><path d="M.6 .5h8.800L5 5.500z" fill="#fff"/></svg>
<div class="rh" style="left:44px;top:18.5px;color:#fff;font-size:15px;line-height:18px;letter-spacing:.3px" id="r_controls">Controls</div>
<div class="blk" style="top:55px;height:80px;background:#e9f1f8"></div>
<svg class="abs" style="left:21px;top:77px" width="7" height="10" viewBox="0 0 7 10"><path d="M.8 1.200Q.8 .2 1.700 .8L6 4.300Q6.700 5 6 5.700L1.700 9.200Q.8 9.800 .8 8.800z" fill="#081a34"/></svg>
<div class="rh" style="top:72.5px;line-height:18px;letter-spacing:0.47px" id="r_aging">Aging replay</div>
<div class="blk" style="top:110px;height:80px;background:#f9fbfd"></div>
<svg class="abs" style="left:24px;top:123px" width="8" height="10" viewBox="0 0 8 10"><path d="M6.500 .8v8.400L1.200 5z" fill="#081a34"/></svg>
<div class="abs" style="left:52px;top:124px;width:160px;height:8px;border-radius:4px;background:#dde7f1"></div>
<div class="abs" style="left:200.500px;top:121px;width:14px;height:14px;border-radius:50%;background:#1a3a7c"></div>
<svg class="abs" style="left:228px;top:123px" width="8" height="10" viewBox="0 0 8 10"><path d="M1.500 .8v8.400L6.800 5z" fill="#a7aeb9"/></svg>
<div class="rl" style="left:95px;top:140.5px;font-size:12px;line-height:16px;letter-spacing:.1px" id="r_date">30 Sep 2018</div>
<div class="blk" style="top:165px;height:80px;background:#e9f1f8"></div>
<svg class="abs" style="left:21px;top:188px" width="7" height="10" viewBox="0 0 7 10"><path d="M.8 1.200Q.8 .2 1.700 .8L6 4.300Q6.700 5 6 5.700L1.700 9.200Q.8 9.800 .8 8.800z" fill="#081a34"/></svg>
<div class="rh" style="top:183.5px;line-height:18px;letter-spacing:0.33px" id="r_health">Health zones</div>
<div class="blk" style="top:221px;height:230px;background:#f9fbfd"></div>
<div class="cb" style="top:238.5px"></div><svg class="abs" style="left:22px;top:240.5px" width="12" height="12" viewBox="0 0 12 12"><path d="M1.200 6.300l3.300 3.200 6.300-7" fill="none" stroke="#0f2452" stroke-width="1.600"/></svg>
<div class="rl" style="left:44px;top:237.5px;line-height:18px;letter-spacing:0.57px" id="r_sel1">Select all</div>
<div class="cb" style="top:271.5px"></div><svg class="abs" style="left:22px;top:273.5px" width="12" height="12" viewBox="0 0 12 12"><path d="M1.200 6.300l3.300 3.200 6.300-7" fill="none" stroke="#0f2452" stroke-width="1.600"/></svg>
<div class="sw" style="top:271.5px;background:#8fdcc0;box-shadow:inset 0 0 0 .6px rgba(0,0,0,.12)"></div>
<div class="rl hz" style="letter-spacing:-.2px;left:72px;top:270.5px;line-height:18px">30%</div>
<div class="cb" style="top:304.5px"></div><svg class="abs" style="left:22px;top:306.5px" width="12" height="12" viewBox="0 0 12 12"><path d="M1.200 6.300l3.300 3.200 6.300-7" fill="none" stroke="#0f2452" stroke-width="1.600"/></svg>
<div class="sw" style="top:304.5px;background:#b7e8d6;box-shadow:inset 0 0 0 .6px rgba(0,0,0,.12)"></div>
<div class="rl hz" style="letter-spacing:-.2px;left:72px;top:303.5px;line-height:18px">50%</div>
<div class="cb" style="top:337.5px"></div><svg class="abs" style="left:22px;top:339.5px" width="12" height="12" viewBox="0 0 12 12"><path d="M1.200 6.300l3.300 3.200 6.300-7" fill="none" stroke="#0f2452" stroke-width="1.600"/></svg>
<div class="sw" style="top:337.5px;background:#fcd9a4;box-shadow:inset 0 0 0 .6px rgba(0,0,0,.12)"></div>
<div class="rl hz" style="letter-spacing:-.2px;left:72px;top:336.5px;line-height:18px">70%</div>
<div class="cb" style="top:370.5px"></div><svg class="abs" style="left:22px;top:372.5px" width="12" height="12" viewBox="0 0 12 12"><path d="M1.200 6.300l3.300 3.200 6.300-7" fill="none" stroke="#0f2452" stroke-width="1.600"/></svg>
<div class="sw" style="top:370.5px;background:#f8bfa3;box-shadow:inset 0 0 0 .6px rgba(0,0,0,.12)"></div>
<div class="rl hz" style="letter-spacing:-.2px;left:72px;top:369.5px;line-height:18px">85%</div>
<div class="cb" style="top:403.5px"></div><svg class="abs" style="left:22px;top:405.5px" width="12" height="12" viewBox="0 0 12 12"><path d="M1.200 6.300l3.300 3.200 6.300-7" fill="none" stroke="#0f2452" stroke-width="1.600"/></svg>
<div class="sw" style="top:403.5px;background:#f9b3b9;box-shadow:inset 0 0 0 .6px rgba(0,0,0,.12)"></div>
<div class="rl hz" style="letter-spacing:-.2px;left:72px;top:402.5px;line-height:18px">95%</div>
<div class="blk" style="top:440px;height:80px;background:#e9f1f8"></div>
<svg class="abs" style="left:21px;top:462px" width="7" height="10" viewBox="0 0 7 10"><path d="M.8 1.200Q.8 .2 1.700 .8L6 4.300Q6.700 5 6 5.700L1.700 9.200Q.8 9.800 .8 8.800z" fill="#081a34"/></svg>
<div class="rh" style="top:457.5px;line-height:18px;letter-spacing:0.27px" id="r_perc">Percentiles</div>
<div class="blk" style="top:495px;height:260px;background:#f9fbfd"></div>
<div class="cb" style="top:512.5px"></div><svg class="abs" style="left:22px;top:514.5px" width="12" height="12" viewBox="0 0 12 12"><path d="M1.200 6.300l3.300 3.200 6.300-7" fill="none" stroke="#0f2452" stroke-width="1.600"/></svg>
<div class="rl" style="left:44px;top:511.5px;line-height:18px;letter-spacing:.57px">Select all</div>
<div class="cb" style="top:545.5px"></div><svg class="abs" style="left:22px;top:547.5px" width="12" height="12" viewBox="0 0 12 12"><path d="M1.200 6.300l3.300 3.200 6.300-7" fill="none" stroke="#0f2452" stroke-width="1.600"/></svg>
<div class="rl pc" style="letter-spacing:-.2px;left:44px;top:544.5px;line-height:18px">30%</div>
<div class="cb" style="top:578.5px"></div><svg class="abs" style="left:22px;top:580.5px" width="12" height="12" viewBox="0 0 12 12"><path d="M1.200 6.300l3.300 3.200 6.300-7" fill="none" stroke="#0f2452" stroke-width="1.600"/></svg>
<div class="rl pc" style="letter-spacing:-.2px;left:44px;top:577.5px;line-height:18px">50%</div>
<div class="cb" style="top:611.5px"></div><svg class="abs" style="left:22px;top:613.5px" width="12" height="12" viewBox="0 0 12 12"><path d="M1.200 6.300l3.300 3.200 6.300-7" fill="none" stroke="#0f2452" stroke-width="1.600"/></svg>
<div class="rl pc" style="letter-spacing:-.2px;left:44px;top:610.5px;line-height:18px">70%</div>
<div class="cb" style="top:644.5px"></div><svg class="abs" style="left:22px;top:646.5px" width="12" height="12" viewBox="0 0 12 12"><path d="M1.200 6.300l3.300 3.200 6.300-7" fill="none" stroke="#0f2452" stroke-width="1.600"/></svg>
<div class="rl pc" style="letter-spacing:-.2px;left:44px;top:643.5px;line-height:18px">85%</div>
<div class="cb" style="top:677.5px"></div><svg class="abs" style="left:22px;top:679.5px" width="12" height="12" viewBox="0 0 12 12"><path d="M1.200 6.300l3.300 3.200 6.300-7" fill="none" stroke="#0f2452" stroke-width="1.600"/></svg>
<div class="rl pc" style="letter-spacing:-.2px;left:44px;top:676.5px;line-height:18px">95%</div>
<div class="cb" style="top:710.5px"></div><svg class="abs" style="left:22px;top:712.5px" width="12" height="12" viewBox="0 0 12 12"><path d="M1.200 6.300l3.300 3.200 6.300-7" fill="none" stroke="#0f2452" stroke-width="1.600"/></svg>
<div class="rl pc" style="letter-spacing:-.2px;left:44px;top:709.5px;line-height:18px">98%</div>
<div class="blk" style="top:747px;height:80px;background:#e9f1f8"></div>
<svg class="abs" style="left:21px;top:769px" width="7" height="10" viewBox="0 0 7 10"><path d="M.8 1.200Q.8 .2 1.700 .8L6 4.300Q6.700 5 6 5.700L1.700 9.200Q.8 9.800 .8 8.800z" fill="#081a34"/></svg>
<div class="rh" style="top:764.5px;line-height:18px;letter-spacing:0.29px" id="r_group">Group by</div>
<div class="blk" style="top:802px;height:180px;background:#f9fbfd"></div>
<div class="abs" style="left:20px;top:820px;width:15px;height:15px;border-radius:50%;background:#e6eef7"></div><div class="abs" style="left:24px;top:824px;width:7px;height:7px;border-radius:50%;background:#1a3a7c"></div>
<div class="rl" style="left:42px;top:818.5px;line-height:18px;letter-spacing:0.7px" id="r_day">Day</div>
<div class="abs" style="left:20px;top:853.5px;width:15px;height:15px;border-radius:50%;background:#fff;border:1px solid #d9dee6"></div>
<div class="rl" style="left:42px;top:851.5px;line-height:18px;letter-spacing:0.75px" id="r_week">Week</div>
<div class="abs" style="left:20px;top:886.5px;width:15px;height:15px;border-radius:50%;background:#fff;border:1px solid #d9dee6"></div>
<div class="rl" style="left:42px;top:884.5px;line-height:18px;letter-spacing:1.0px" id="r_month">Month</div>
<div class="blk" style="top:922px;height:80px;background:#081a34"></div>
<div class="abs" style="left:166.500px;top:887px;width:59px;height:59px;border-radius:50%;background:#081a34"></div>
<svg class="abs" style="left:184.800px;top:905.800px" width="22" height="22" viewBox="0 0 22 22"><path d="M2.500 1h17a1.500 1.500 0 0 1 1.500 1.500v12a1.500 1.500 0 0 1-1.500 1.500H5l-4 4V2.500A1.500 1.500 0 0 1 2.500 1z" fill="#fff"/><g fill="#081a34"><rect x="6" y="7.700" width="2" height="2"/><rect x="10" y="7.700" width="2" height="2"/><rect x="14" y="7.700" width="2" height="2"/></g></svg>
<svg class="abs" style="left:19.5px;top:947px" width="10" height="6" viewBox="0 0 10 6"><path d="M.6 .5h8.800L5 5.500z" fill="#fff"/></svg>
<div class="rh" style="left:44px;top:941.5px;color:#fff;font-size:15px;line-height:18px;letter-spacing:0.42px" id="r_filters">Filters (No cards)</div>
<div class="blk" style="top:978px;height:30px;background:#fbfcfe;left:7px;width:246px;border-radius:12px 12px 0 0"></div>
</div>

<div class="abs" style="left:0;top:971px;width:10px;height:10px;background:radial-gradient(circle at 10px 0,rgba(0,0,0,0) 9.500px,#000 10.500px)"></div>
<div class="abs" style="left:1700px;top:971px;width:10px;height:10px;background:radial-gradient(circle at 0 0,rgba(0,0,0,0) 9.500px,#000 10.500px)"></div>
<div class="abs" style="left:0;top:0;width:1px;height:975px;background:rgba(150,170,200,.28)"></div>
<div class="abs" style="left:1709px;top:10px;width:1px;height:962px;background:rgba(150,170,200,.45)"></div>
</body>
</html>
